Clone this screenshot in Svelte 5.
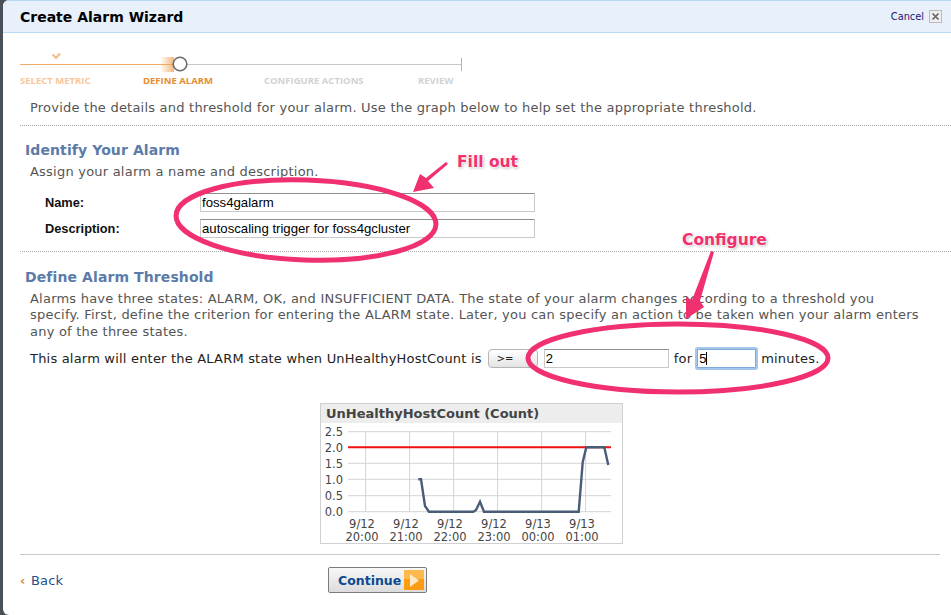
<script lang="ts">
	const steps = [
		{ label: "SELECT METRIC", state: "done" },
		{ label: "DEFINE ALARM", state: "active" },
		{ label: "CONFIGURE ACTIONS", state: "todo" },
		{ label: "REVIEW", state: "todo" }
	];

	const grid = [365.3, 409.3, 453.3, 497.3, 541.3, 585.3];
	const yTicks = [
		{ label: "2.5", y: 28.7 },
		{ label: "2.0", y: 44.3 },
		{ label: "1.5", y: 60.3 },
		{ label: "1.0", y: 76.3 },
		{ label: "0.5", y: 92.7 },
		{ label: "0.0", y: 108.7 }
	];
	const xTicks = [
		["9/12", "20:00", 41],
		["9/12", "21:00", 85],
		["9/12", "22:00", 129],
		["9/12", "23:00", 173],
		["9/13", "00:00", 217],
		["9/13", "01:00", 261]
	];
	// traced from the chart, in chart-local pixels
	const series = "97.3,76.3 100,76.3 104,103 108,108.7 152.3,108.7 155,107 159,98.7 163,108.7 257.7,108.7 261.7,59.3 265.3,44.3 283.3,44.3 287.3,62";
</script>

<div class="page">
	<div class="dialog">
		<header class="title-bar">
			<h1>Create Alarm Wizard</h1>
			<a class="cancel" href="#cancel">Cancel <span class="close">
				<svg width="11" height="11" viewBox="0 0 11 11"><path d="M2.5 2.5l6 6M8.5 2.5l-6 6" stroke="#666" stroke-width="1.7" /></svg>
			</span></a>
		</header>

		<div class="stepper">
			<svg class="track" width="445" height="26" viewBox="0 0 445 26">
				<defs>
					<linearGradient id="fade" x1="0" x2="1" y1="0" y2="0">
						<stop offset="0" stop-color="#f0a050" stop-opacity="0" />
						<stop offset="1" stop-color="#f0a050" stop-opacity="0.75" />
					</linearGradient>
				</defs>
				<path d="M32.5 8.5l3.5 3.5 4-4.5" fill="none" stroke="#f3bd8a" stroke-width="2.2" />
				<rect x="152" y="18" width="289" height="1" fill="#c8c8c8" />
				<rect x="0" y="18" width="152" height="1" fill="#efaa66" />
				<rect x="140" y="11" width="14" height="15" fill="url(#fade)" />
				<rect x="441" y="12" width="1" height="13" fill="#b5b5b5" />
				<circle cx="160" cy="18" r="6.8" fill="#fff" stroke="#6d6d6d" stroke-width="1.6" />
			</svg>
			<ol class="steps">
				{#each steps as step}
					<li class={step.state}>{step.label}</li>
				{/each}
			</ol>
		</div>

		<p class="intro">Provide the details and threshold for your alarm. Use the graph below to help set the appropriate threshold.</p>

		<section class="identify">
			<h2>Identify Your Alarm</h2>
			<p class="sub">Assign your alarm a name and description.</p>
			<div class="form">
				<label for="alarm-name">Name:</label>
				<input id="alarm-name" value="foss4galarm" readonly />
				<label for="alarm-desc">Description:</label>
				<input id="alarm-desc" value="autoscaling trigger for foss4gcluster" readonly />
			</div>
		</section>

		<section class="threshold">
			<h2>Define Alarm Threshold</h2>
			<p class="sub">Alarms have three states: ALARM, OK, and INSUFFICIENT DATA. The state of your alarm changes according to a threshold you specify. First, define the criterion for entering the ALARM state. Later, you can specify an action to be taken when your alarm enters any of the three states.</p>
			<div class="rule">
				<span class="rule-text">This alarm will enter the ALARM state when UnHealthyHostCount is</span>
				<button class="compare">&gt;=</button>
				<input class="amount" value="2" readonly />
				<span>for</span>
				<span class="period"><input value="5" readonly /><i class="caret"></i></span>
				<span>minutes.</span>
			</div>

			<figure class="chart">
				<figcaption>UnHealthyHostCount (Count)</figcaption>
				<svg width="301" height="120" viewBox="0 20 301 120">
					{#each grid as x}
						<line x1={x - 320.7} x2={x - 320.7} y1="29" y2="109" stroke="#d4d4d4" />
					{/each}
					{#each yTicks as tick}
						<line x1="27" x2="290" y1={tick.y} y2={tick.y} stroke="#d4d4d4" />
						<text class="tick" x="22" y={tick.y + 4.5} text-anchor="end">{tick.label}</text>
					{/each}
					<line x1="27" x2="290" y1="44.3" y2="44.3" stroke="#f01010" stroke-width="2" />
					<polyline points={series} fill="none" stroke="#4a5d78" stroke-width="2.4" />
					{#each xTicks as [date, time, x]}
						<text class="tick" x={x} y="125" text-anchor="middle">{date}</text>
						<text class="tick" x={x} y="138" text-anchor="middle">{time}</text>
					{/each}
				</svg>
			</figure>
		</section>

		<footer class="actions">
			<a class="back" href="#back"><span class="chev">‹</span> Back</a>
			<button class="continue">
				Continue
				<span class="go"><svg width="20" height="20" viewBox="0 0 20 20"><rect width="20" height="20" fill="#fb9c12" /><rect width="20" height="9" fill="#fdb84e" /><path d="M6 4l9 6.5-9 6.5z" fill="#fde9c6" /></svg></span>
			</button>
		</footer>
	</div>

	<svg class="marks" width="951" height="615" viewBox="0 0 951 615">
		<ellipse cx="306" cy="220" rx="130" ry="40" fill="none" stroke="#f1306f" stroke-width="5" transform="rotate(2 306 220)" />
		<ellipse cx="678" cy="358" rx="150" ry="34" fill="none" stroke="#f1306f" stroke-width="5" />
		<path d="M448 164L428 181L434 188L413 192L420 174L426 178L446 162Z" fill="#f1306f" />
		<path d="M714 252L700 301L704 307L686 319L686 297L692 300L711 251Z" fill="#f1306f" />
	</svg>
	<span class="note fill">Fill out</span>
	<span class="note configure">Configure</span>
</div>

<style>
	:global(body) {
		margin: 0;
		background: #4a5058;
	}

	.page {
		position: relative;
		width: 951px;
		height: 615px;
		overflow: hidden;
		font-family: "DejaVu Sans", Verdana, sans-serif;
		font-size: 13px;
		color: #555;
	}

	.dialog {
		margin-left: 3px;
		height: 615px;
		background: #fff;
		border-radius: 6px 0 0 6px;
		display: flex;
		flex-direction: column;
		box-sizing: border-box;
	}

	.title-bar {
		height: 33px;
		box-sizing: border-box;
		flex: none;
		display: flex;
		align-items: center;
		justify-content: space-between;
		padding: 0 9px 0 17px;
		background: #e8f0fb;
		border-top: 1px solid #b9d9f5;
		border-bottom: 1px solid #b9d9f5;
		border-radius: 6px 0 0 0;
	}

	h1 {
		margin: 0;
		font-size: 14px;
		font-weight: bold;
		color: #000;
	}

	.cancel {
		display: flex;
		align-items: center;
		gap: 5px;
		font-size: 9.8px;
		color: #1a1a6e;
		text-decoration: none;
	}

	.close {
		display: flex;
		align-items: center;
		justify-content: center;
		width: 11px;
		height: 11px;
		border: 1px solid #bbb;
		background: #eee;
	}

	.stepper {
		padding: 13px 0 0 17px;
		height: 64px;
		box-sizing: border-box;
		flex: none;
	}

	.track {
		display: block;
	}

	.steps {
		list-style: none;
		margin: 3px 0 0;
		padding: 0;
		display: grid;
		grid-template-columns: 123px 121px 154px auto;
		width: 445px;
		font-family: "Open Sans", sans-serif;
		font-size: 9.5px;
		font-weight: 700;
		line-height: 12px;
	}

	.done {
		color: #f7c79a;
	}

	.active {
		color: #e88b2e;
	}

	.todo {
		color: #d2d2d2;
	}

	.intro {
		margin: 0 0 0 17px;
		padding: 3px 0 9px 10px;
		line-height: 16px;
		letter-spacing: 0.22px;
		border-bottom: 1px dotted #aaa;
		white-space: nowrap;
		flex: none;
	}

	h2 {
		margin: 0;
		font-size: 14px;
		font-weight: bold;
		line-height: 18px;
		letter-spacing: 0.1px;
		color: #5b7ba8;
	}

	.sub {
		margin: 0;
		padding-left: 5px;
		line-height: 16.5px;
		letter-spacing: 0.22px;
	}

	.identify {
		margin-left: 17px;
		padding: 15px 0 13px 5px;
		border-bottom: 1px dotted #aaa;
		flex: none;
	}

	.identify .sub {
		margin-top: 5px;
	}

	.form {
		display: grid;
		grid-template-columns: 155px 335px;
		row-gap: 7px;
		margin: 12px 0 0 0;
		padding-left: 20px;
		align-items: center;
		font-family: "Liberation Sans", Arial, sans-serif;
		font-size: 12.8px;
	}

	.form label {
		font-weight: bold;
		color: #111;
	}

	input {
		box-sizing: border-box;
		height: 19px;
		width: 100%;
		padding: 0 1px;
		border: 1px solid #c9c9c9;
		border-top-color: #8f8f8f;
		background: #fff;
		font-family: "Liberation Sans", Arial, sans-serif;
		font-size: 13.2px;
		color: #000;
		outline: none;
	}

	.threshold {
		margin-left: 17px;
		padding: 16px 0 0 5px;
		flex: 1;
	}

	.threshold .sub {
		width: 895px;
		margin-top: 5px;
	}

	.rule {
		display: flex;
		align-items: center;
		gap: 5px;
		margin: 8px 0 0 5px;
		height: 20px;
		letter-spacing: 0.2px;
		color: #222;
		white-space: nowrap;
	}

	.compare {
		box-sizing: border-box;
		width: 50px;
		height: 19px;
		margin-left: 1px;
		padding: 0 0 0 8px;
		text-align: left;
		border: 1px solid #b5b5b5;
		border-radius: 4px;
		background: linear-gradient(#fff, #e4e4e4);
		font-family: "DejaVu Sans", Verdana, sans-serif;
		font-size: 10px;
		color: #222;
	}

	.amount {
		width: 125px;
		margin-left: 1px;
		font-size: 13px;
	}

	.period {
		position: relative;
		display: flex;
		width: 59px;
	}

	.period input {
		font-size: 13px;
		border: 1px solid #7fa9d8;
		box-shadow: 0 0 0 2px #a4c6ec;
		border-radius: 1px;
	}

	.caret {
		position: absolute;
		left: 9px;
		top: 3px;
		width: 1px;
		height: 13px;
		background: #000;
	}

	.chart {
		box-sizing: border-box;
		width: 303px;
		height: 141px;
		margin: 35px 0 0 295px;
		border: 1px solid #d0d0d0;
		background: #fff;
	}

	figcaption {
		height: 19px;
		padding-left: 5px;
		background: #ededed;
		font-size: 13px;
		font-weight: bold;
		line-height: 19px;
		color: #444;
	}

	.chart svg {
		display: block;
	}

	.tick {
		font-family: "DejaVu Sans", Verdana, sans-serif;
		font-size: 11.5px;
		fill: #444;
	}

	.actions {
		flex: none;
		margin: 0 11px 0 17px;
		height: 61px;
		box-sizing: border-box;
		border-top: 1px solid #c8c8c8;
		display: flex;
		align-items: center;
		padding-bottom: 10px;
	}

	.back {
		width: 308px;
		color: #1f4e8c;
		letter-spacing: 0.2px;
		text-decoration: none;
		font-size: 13px;
	}

	.chev {
		color: #e8822e;
		font-weight: bold;
		margin-right: 1px;
	}

	.continue {
		box-sizing: border-box;
		display: flex;
		align-items: center;
		justify-content: space-between;
		width: 99px;
		height: 26px;
		padding: 0 2px 0 9px;
		border: 1px solid #7b7b7b;
		border-radius: 2px;
		background: linear-gradient(#f8f8f8, #dcdcdc);
		font-family: "DejaVu Sans", Verdana, sans-serif;
		font-size: 12.5px;
		font-weight: bold;
		color: #0b4a93;
	}

	.go {
		display: flex;
	}

	.marks {
		position: absolute;
		left: 0;
		top: 0;
		pointer-events: none;
	}

	.note {
		position: absolute;
		font-family: "DejaVu Sans", Verdana, sans-serif;
		font-size: 15.5px;
		font-weight: bold;
		color: #f1306f;
		text-shadow: 0 0 2px #fff, 0 0 2px #fff, 0 0 3px #fff, 1px 1px 3px #999;
		white-space: nowrap;
	}

	.fill {
		left: 457px;
		top: 153px;
	}

	.configure {
		left: 682px;
		top: 231px;
	}
</style>
